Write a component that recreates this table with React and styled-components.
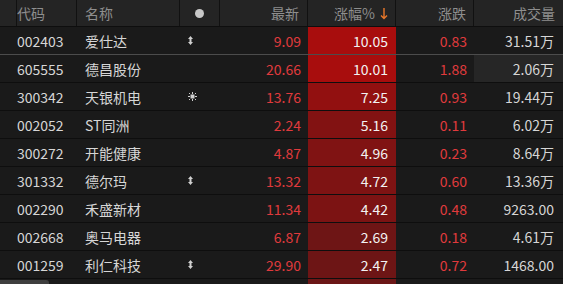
import React from "react";
import styled, { createGlobalStyle } from "styled-components";

const GlobalStyle = createGlobalStyle`
  html, body {
    margin: 0;
    padding: 0;
    background: #1a1a1a;
    overflow: hidden;
  }
  body {
    font-family: "Noto Sans CJK SC", "Noto Sans", sans-serif;
  }
`;

const COLS = "10px 67px 103px 40px 88px 88px 78px 89px";

const Board = styled.div`
  position: relative;
  width: 563px;
  height: 284px;
  overflow: hidden;
  background: #1a1a1a;
  font-size: 14px;
`;

const HeaderRow = styled.div`
  display: grid;
  grid-template-columns: ${COLS};
  height: 27px;
  background: #242424;
  border-bottom: 1px solid #0e0e0e;
  box-sizing: border-box;
`;

const HeadCell = styled.div`
  display: flex;
  align-items: center;
  justify-content: ${(p) =>
    p.$align === "right" ? "flex-end" : p.$align === "center" ? "center" : "flex-start"};
  gap: 5px;
  padding: 0 ${(p) => p.$pad || 8}px;
  border-right: 1px solid #111;
  color: #8e8e8e;
  white-space: nowrap;
  &:last-child {
    border-right: 0;
  }
`;

const Row = styled.div`
  display: grid;
  grid-template-columns: ${COLS};
  height: 28px;
  box-sizing: border-box;
  border-bottom: 1px solid ${(p) => (p.$selected ? "#4c4c4c" : "#0e0e0e")};
`;

const Cell = styled.div`
  display: flex;
  align-items: center;
  justify-content: ${(p) => (p.$align === "right" ? "flex-end" : "flex-start")};
  padding: 0 ${(p) => p.$pad || 8}px;
  color: ${(p) => (p.$red ? "#e03a3d" : "#d6d6d6")};
  background: ${(p) => (p.$hover ? "#262626" : "transparent")};
  white-space: nowrap;
`;

const heatColor = (v) => {
  const t = Math.max(0, Math.min(1, (v - 2) / 8));
  const r = Math.round(105 + t * 63);
  const g = Math.round(22 - t * 9);
  return `rgb(${r}, ${g}, ${g})`;
};

const HeatCell = styled.div`
  display: flex;
  align-items: center;
  justify-content: flex-end;
  padding: 0 8px;
  color: #f2f2f2;
  background: ${(p) => heatColor(p.$value)};
`;

const Dot = styled.span`
  width: 9px;
  height: 9px;
  border-radius: 50%;
  background: #c8c8c8;
`;

const ScrollThumb = styled.div`
  position: absolute;
  left: 0;
  bottom: 0;
  width: 49px;
  height: 4px;
  background: #3e3e3e;
  border-top-right-radius: 3px;
`;

const UpDownIcon = () => (
  <svg width="5" height="9" viewBox="0 0 5 9">
    <polygon
      points="2.5,0 5,3 3.5,3 3.5,6 5,6 2.5,9 0,6 1.5,6 1.5,3 0,3"
      fill="#cfcfcf"
    />
  </svg>
);

const SunIcon = () => (
  <svg width="9" height="9" viewBox="0 0 9 9" fill="#cfcfcf">
    <rect x="2.5" y="2.5" width="4" height="4" />
    <rect x="4" y="0" width="1" height="2" />
    <rect x="4" y="7" width="1" height="2" />
    <rect x="0" y="4" width="2" height="1" />
    <rect x="7" y="4" width="2" height="1" />
    <rect x="1" y="1" width="1" height="1" />
    <rect x="7" y="1" width="1" height="1" />
    <rect x="1" y="7" width="1" height="1" />
    <rect x="7" y="7" width="1" height="1" />
  </svg>
);

const SortArrow = () => (
  <svg width="8" height="13" viewBox="0 0 8 13">
    <path d="M4 1 V11.5 M1 8.5 L4 11.5 L7 8.5" stroke="#e8772a" strokeWidth="1.4" fill="none" />
  </svg>
);

const stocks = [
  { code: "002403", name: "爱仕达", mark: "updown", price: "9.09", pct: 10.05, chg: "0.83", vol: "31.51万", selected: true },
  { code: "605555", name: "德昌股份", price: "20.66", pct: 10.01, chg: "1.88", vol: "2.06万", hover: true },
  { code: "300342", name: "天银机电", mark: "sun", price: "13.76", pct: 7.25, chg: "0.93", vol: "19.44万" },
  { code: "002052", name: "ST同洲", price: "2.24", pct: 5.16, chg: "0.11", vol: "6.02万" },
  { code: "300272", name: "开能健康", price: "4.87", pct: 4.96, chg: "0.23", vol: "8.64万" },
  { code: "301332", name: "德尔玛", mark: "updown", price: "13.32", pct: 4.72, chg: "0.60", vol: "13.36万" },
  { code: "002290", name: "禾盛新材", price: "11.34", pct: 4.42, chg: "0.48", vol: "9263.00" },
  { code: "002668", name: "奥马电器", price: "6.87", pct: 2.69, chg: "0.18", vol: "4.61万" },
  { code: "001259", name: "利仁科技", mark: "updown", price: "29.90", pct: 2.47, chg: "0.72", vol: "1468.00" },
];

const App = () => {
  return (
    <>
      <GlobalStyle />
      <Board>
        <HeaderRow>
          <HeadCell />
          <HeadCell $pad={7}>代码</HeadCell>
          <HeadCell>名称</HeadCell>
          <HeadCell $align="center">
            <Dot />
          </HeadCell>
          <HeadCell $align="right">最新</HeadCell>
          <HeadCell $align="right" $pad={7}>
            涨幅%
            <SortArrow />
          </HeadCell>
          <HeadCell $align="right" $pad={7}>涨跌</HeadCell>
          <HeadCell $align="right">成交量</HeadCell>
        </HeaderRow>
        {stocks.map((s) => (
          <Row key={s.code} $selected={s.selected}>
            <Cell />
            <Cell $pad={7}>{s.code}</Cell>
            <Cell>{s.name}</Cell>
            <Cell>
              {s.mark === "updown" && <UpDownIcon />}
              {s.mark === "sun" && <SunIcon />}
            </Cell>
            <Cell $align="right" $red $pad={7}>{s.price}</Cell>
            <HeatCell $value={s.pct}>{s.pct.toFixed(2)}</HeatCell>
            <Cell $align="right" $red $pad={7}>{s.chg}</Cell>
            <Cell $align="right" $hover={s.hover} $pad={9}>{s.vol}</Cell>
          </Row>
        ))}
        <Row>
          <Cell />
          <Cell />
          <Cell />
          <Cell />
          <Cell />
          <HeatCell $value={2.3} />
          <Cell />
          <Cell />
        </Row>
        <ScrollThumb />
      </Board>
    </>
  );
};

export default App;
